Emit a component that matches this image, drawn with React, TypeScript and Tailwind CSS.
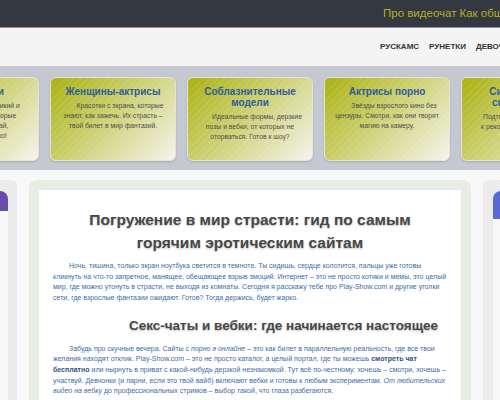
import React from "react";

const cardBg =
  "[background-image:repeating-linear-gradient(135deg,rgba(255,255,255,0.07)_0px,rgba(255,255,255,0.07)_2px,transparent_2px,transparent_5px),linear-gradient(135deg,#a9b10f_0%,#ccd070_45%,#f4f4ec_100%)]";

function Card({ title, children }: { title: React.ReactNode; children: React.ReactNode }) {
  return (
    <div
      className={`w-[126px] h-[84px] shrink-0 rounded-[6px] border border-[#e4e6d4] px-[6px] pt-[8px] ${cardBg} shadow-[0_1px_2px_rgba(0,0,0,0.15)]`}
    >
      <div className="text-center font-bold text-[10px] leading-[11px] text-[#2e5c9c]">{title}</div>
      <div className="mt-[4px] text-center text-[6.8px] leading-[10px] text-[#4e4e4e] indent-[14px]">{children}</div>
    </div>
  );
}

export default function App() {
  return (
    <div className="w-[500px] h-[400px] overflow-hidden bg-[#f7f7f7] font-['Liberation_Sans',Arial,sans-serif]">
      {/* top bar */}
      <div className="h-[28px] bg-[#343841] border-b border-[#8f939b] flex items-center pl-[383px] gap-[3px] whitespace-nowrap text-[11.5px] text-[#a7b51d]">
        <span>Про видеочат</span>
        <span>Как общаться</span>
      </div>
      {/* nav */}
      <div className="h-[38px] bg-[#f4f4f4] flex items-center pl-[374px] whitespace-nowrap text-[8px] font-bold text-[#333]">
        <span className="w-[4px] h-[4px] rounded-full bg-white shadow-[0_0_1px_rgba(0,0,0,0.15)] mr-[6px]" />
        <span className="mr-[10px]">РУСКАМС</span>
        <span className="mr-[10px]">РУНЕТКИ</span>
        <span>ДЕВОЧКИ</span>
      </div>
      {/* cards band */}
      <div className="h-[104px] bg-[#c5c8d1] flex justify-center gap-[11px] pt-[11px]">
        <Card title="Все богини">
          Скромный вид, дикий и
          <br />
          жаркий нрав. Те, которые
          <br />
          сводят с ума. Читай,
          <br />
          смотри, будет ярко!
        </Card>
        <Card title="Женщины-актрисы">
          Красотки с экрана, которые знают, как зажечь. Их страсть – твой билет в мир фантазий.
        </Card>
        <Card title="Соблазнительные модели">
          Идеальные формы, дерзкие позы и вебки, от которых не оторваться. Готов к шоу?
        </Card>
        <Card title="Актрисы порно">
          Звёзды взрослого кино без цензуры. Смотри, как они творят магию на камеру.
        </Card>
        <Card title="Симпатичные спортсменки">
          Подтянутые тела и готовность к рекордам – девчонки, что зажигают.
        </Card>
      </div>
      {/* main */}
      <div className="flex justify-center gap-[12px] pt-[10px] bg-[#f8f8f8]">
        <div className="w-[200px] shrink-0 h-[260px] rounded-[6px] bg-[#ececec] p-[9px] pt-[11px]">
          <div className="h-[20px] rounded-t-[8px] bg-[linear-gradient(90deg,#5a6ad8,#6a4aad)]" />
          <div className="h-[220px] bg-[#f8f8f8]" />
        </div>
        <div className="w-[442px] shrink-0 rounded-[8px] bg-[#e6ede3] p-[10px] pb-0">
          <div className="bg-white px-[14px] pt-[18px] pb-[20px]">
            <h1 className="text-center font-bold text-[15.5px] leading-[23px] text-[#474747] [text-shadow:0_1px_2px_rgba(0,0,0,0.25)]">
              Погружение в мир страсти: гид по самым
              <br />
              горячим эротическим сайтам
            </h1>
            <p className="mt-[7px] text-[7px] leading-[10.7px] text-[#3b6ca6] indent-[16px]">
              Ночь, тишина, только экран ноутбука светится в темноте. Ты сидишь, сердце колотится, пальцы уже готовы
              кликнуть на что-то запретное, манящее, обещающее взрыв эмоций. Интернет – это не просто котики и мемы,
              это целый мир, где можно утонуть в страсти, не выходя из комнаты. Сегодня я расскажу тебе про
              Play-Show.com и другие уголки сети, где взрослые фантазии ожидают. Готов? Тогда держись, будет жарко.
            </p>
            <h2 className="mt-[12px] pl-[67px] text-center font-bold text-[13.5px] leading-[20px] text-[#474747] [text-shadow:0_1px_2px_rgba(0,0,0,0.25)] whitespace-nowrap">
              Секс-чаты и вебки: где начинается настоящее
            </h2>
            <p className="mt-[8px] text-[7px] leading-[10.6px] text-[#3b6ca6] indent-[16px]">
              Забудь про скучные вечера. Сайты с <em>порно в онлайне</em> – это как билет в параллельную реальность,
              где все твои желания находят отклик. Play-Show.com – это не просто каталог, а целый портал, где ты
              можешь <strong className="text-[#2b4f80]">смотреть чат бесплатно</strong> или нырнуть в приват с
              какой-нибудь дерзкой незнакомкой. Тут всё по-честному: хочешь – смотри, хочешь – участвуй. Девчонки (и
              парни, если это твой вайб) включают вебки и готовы к любым экспериментам.{" "}
              <em>От любительских видео на вебку</em> до профессиональных стримов – выбор такой, что глаза
              разбегаются.
            </p>
          </div>
        </div>
        <div className="w-[200px] shrink-0 h-[260px] rounded-[6px] bg-[#ececec] p-[10px] pt-[11px]">
          <div className="h-[28px] rounded-t-[8px] bg-[linear-gradient(90deg,#5a6ad8,#6a4aad)]" />
          <div className="h-[220px] bg-[#f8f8f8]" />
        </div>
      </div>
    </div>
  );
}
